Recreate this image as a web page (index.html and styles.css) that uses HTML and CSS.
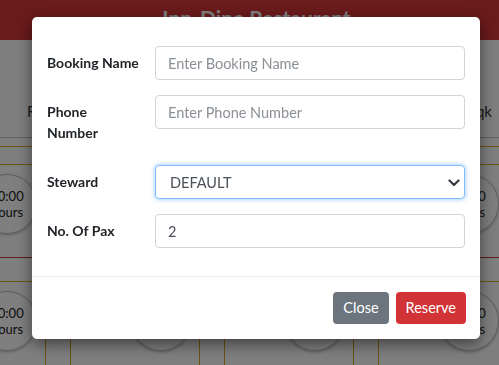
FILE: index.html
```html
<!DOCTYPE html>
<html lang="en">
<head>
    <meta charset="UTF-8">
    <meta name="viewport" content="width=device-width, initial-scale=1.0">
    <title>Inn-Dine Restaurant</title>
    <link rel="stylesheet" href="styles.css">
</head>
<body>
    <header class="topbar">
        <h1>Inn-Dine Restaurant</h1>
    </header>

    <nav class="tabs">
        <span class="tab">Rooftop</span>
        <span class="tab">Garden</span>
        <span class="tab tab-last">Snaqk</span>
    </nav>

    <section class="floor">
        <div class="tables">
            <div class="table-card"><div class="timer">00:00<br>hours</div></div>
            <div class="table-card"><div class="timer">00:00<br>hours</div></div>
            <div class="table-card"><div class="timer">00:00<br>hours</div></div>
            <div class="table-card"><div class="timer">00:00<br>hours</div></div>
            <div class="table-card"><div class="timer">00:00<br>hours</div></div>
            <div class="table-card"><div class="timer">00:00<br>hours</div></div>
            <div class="table-card"><div class="timer">00:00<br>hours</div></div>
            <div class="table-card"><div class="timer">00:00<br>hours</div></div>
            <div class="table-card"><div class="timer">00:00<br>hours</div></div>
            <div class="table-card"><div class="timer">00:00<br>hours</div></div>
        </div>
    </section>

    <div class="backdrop"></div>

    <div class="modal">
        <form class="modal-body">
            <div class="form-row">
                <label for="bookingName">Booking Name</label>
                <input type="text" id="bookingName" placeholder="Enter Booking Name">
            </div>
            <div class="form-row">
                <label for="phoneNumber">Phone<br>Number</label>
                <input type="text" id="phoneNumber" placeholder="Enter Phone Number">
            </div>
            <div class="form-row">
                <label for="steward">Steward</label>
                <div class="select-wrap">
                    <select id="steward" class="is-focused">
                        <option>DEFAULT</option>
                    </select>
                    <svg class="chevron" width="12" height="8" viewBox="0 0 12 8">
                        <path d="M1.5 1.5 L6 6 L10.5 1.5" fill="none" stroke="#343a40" stroke-width="2.2" stroke-linecap="round" stroke-linejoin="round"/>
                    </svg>
                </div>
            </div>
            <div class="form-row">
                <label for="pax">No. Of Pax</label>
                <input type="number" id="pax" value="2">
            </div>
        </form>
        <div class="modal-footer">
            <button class="btn btn-secondary">Close</button>
            <button class="btn btn-danger">Reserve</button>
        </div>
    </div>
</body>
</html>
```

FILE: styles.css
```css
body {
    font-family: Lato, "Liberation Sans", sans-serif;
    margin: 0;
    background-color: #ffffff;
    color: #212529;
    overflow: hidden;
}
.topbar {
    height: 40px;
    background-color: #d43636;
    color: white;
    text-align: center;
}
.topbar h1 {
    margin: 0;
    padding-top: 5px;
    font-size: 21px;
    padding-left: 14px;
}
.tabs {
    height: 98px;
    display: flex;
    justify-content: space-between;
    align-items: flex-end;
    padding: 0 2px 17px 27px;
    border-bottom: 1px solid #c8c8c8;
    box-sizing: border-box;
    font-size: 15px;
    color: #333;
}
.tab-last {
    margin-right: 5px;
}
.floor {
    margin-top: 8px;
    border-top: 1px solid #daa520;
    padding-top: 17px;
}
.tables {
    display: grid;
    grid-template-columns: repeat(5, 130px);
    column-gap: 24px;
    row-gap: 23px;
    margin-left: -84px;
}
.table-card {
    height: 94px;
    border: 1px solid #daa520;
    border-bottom-color: #c0392b;
    border-radius: 10px;
    box-sizing: border-box;
    padding: 9px 0 0 60px;
}
.timer {
    width: 60px;
    height: 60px;
    border-radius: 50%;
    border: 1px solid #bbb;
    box-shadow: 0 1px 3px rgba(0,0,0,0.3);
    box-sizing: border-box;
    display: flex;
    align-items: center;
    justify-content: center;
    text-align: center;
    font-size: 13px;
    line-height: 16px;
    color: #222;
}
.backdrop {
    position: fixed;
    inset: 0;
    background: rgba(0,0,0,0.5);
}
.modal {
    position: fixed;
    top: 17px;
    left: 32px;
    width: 448px;
    background: white;
    border-radius: 5px;
    box-shadow: 0 5px 15px rgba(0,0,0,0.5);
}
.modal-body {
    margin: 0;
    padding: 29px 15px 13px 15px;
}
.form-row {
    display: grid;
    grid-template-columns: 108px 1fr;
    align-items: start;
    margin-bottom: 15px;
}
label {
    font-weight: bold;
    font-size: 14px;
    line-height: 21px;
    padding: 6px 0 7px;
    white-space: nowrap;
    color: #212529;
}
input, select {
    width: 100%;
    height: 34px;
    padding: 0 12px;
    border: 1px solid #ced4da;
    border-radius: 4px;
    box-sizing: border-box;
    font-family: Lato, "Liberation Sans", sans-serif;
    font-size: 14.5px;
    color: #495057;
    background: white;
}
input::placeholder {
    color: #8a9096;
}
input[type="number"] {
    appearance: textfield;
}
.select-wrap {
    position: relative;
}
select {
    appearance: none;
    padding-left: 14px;
}
select.is-focused {
    border-color: #80bdff;
    box-shadow: 0 0 5px rgba(0,123,255,0.45);
    outline: none;
}
.chevron {
    position: absolute;
    right: 5px;
    top: 14px;
}
.modal-footer {
    border-top: 1px solid #e9ecef;
    padding: 15px 14px 15px 15px;
    display: flex;
    justify-content: flex-end;
    gap: 7px;
}
.btn {
    border: none;
    border-radius: 4px;
    color: white;
    font-family: Lato, "Liberation Sans", sans-serif;
    font-size: 14.5px;
    line-height: 22px;
    padding: 5px 10px;
}
.btn-secondary {
    background-color: #6c757d;
}
.btn-danger {
    background-color: #d13336;
}
```
